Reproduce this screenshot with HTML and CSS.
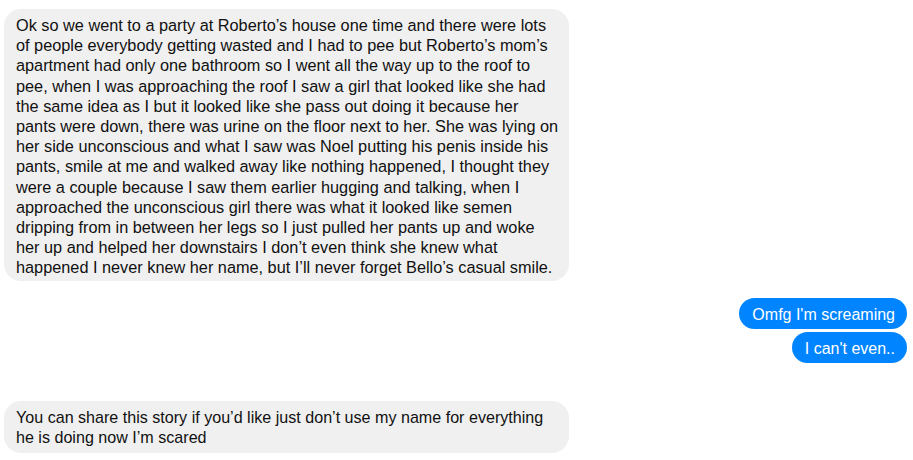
FILE: index.html
```html
<!DOCTYPE html>
<html>
<head>
<meta charset="utf-8">
<link rel="stylesheet" href="styles.css">
</head>
<body>
<div class="thread">
  <div class="bubble in first">Ok so we went to a party at Roberto’s house one time and there were lots<br>of people everybody getting wasted and I had to pee but Roberto’s mom’s<br>apartment had only one bathroom so I went all the way up to the roof to<br>pee, when I was approaching the roof I saw a girl that looked like she had<br>the same idea as I but it looked like she pass out doing it because her<br>pants were down, there was urine on the floor next to her. She was lying on<br>her side unconscious and what I saw was Noel putting his penis inside his<br>pants, smile at me and walked away like nothing happened, I thought they<br>were a couple because I saw them earlier hugging and talking, when I<br>approached the unconscious girl there was what it looked like semen<br>dripping from in between her legs so I just pulled her pants up and woke<br>her up and helped her downstairs I don’t even think she knew what<br>happened I never knew her name, but I’ll never forget Bello’s casual smile.</div>
  <div class="outgoing">
    <div class="bubble out">Omfg I'm screaming</div>
    <div class="bubble out">I can't even..</div>
  </div>
  <div class="bubble in last">You can share this story if you’d like just don’t use my name for everything<br>he is doing now I’m scared</div>
</div>
</body>
</html>
```
FILE: styles.css
```css
html, body {
  margin: 0;
  padding: 0;
  background: #ffffff;
}
body {
  width: 913px;
  height: 460px;
  overflow: hidden;
  font-family: "Liberation Sans", Arial, Helvetica, sans-serif;
  color: #111111;
}
.thread {
  display: flex;
  flex-direction: column;
  padding: 9px 6px 0 4px;
}
.bubble {
  font-size: 16px;
  line-height: 20px;
  border-radius: 17px;
  box-sizing: border-box;
  white-space: nowrap;
}
.bubble.in {
  background: #f0f0f0;
  width: 565px;
  align-self: flex-start;
}
.bubble.first {
  font-size: 16.3px;
  line-height: 20.2px;
  padding: 6px 12px 3.5px 12px;
}
.bubble.last {
  margin-top: 38px;
  font-size: 16.1px;
  padding: 6px 12px 6px 12px;
}
.outgoing {
  display: flex;
  flex-direction: column;
  align-items: flex-end;
  gap: 3px;
  margin-top: 17px;
}
.bubble.out {
  background: #0084ff;
  color: #ffffff;
  padding: 7px 12px 4px 13px;
  border-radius: 16px;
  height: 31px;
}
```
